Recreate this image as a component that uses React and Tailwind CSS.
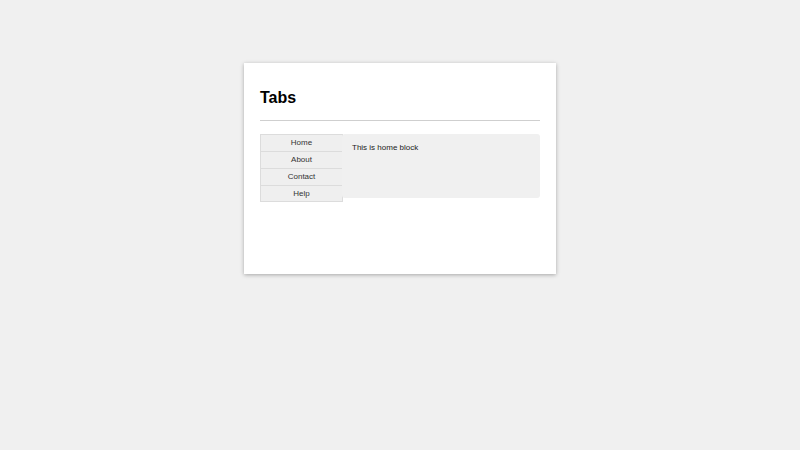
export default function App() {
  const tabs = ["Home", "About", "Contact", "Help"];
  return (
    <div className="min-h-[450px] w-full bg-[#f0f0f0] pt-[63px] font-['Liberation_Sans',Arial,sans-serif]">
      <div className="mx-auto h-[211px] w-[312px] bg-white px-4 pt-[10px] shadow-[0_1px_4px_rgba(0,0,0,0.3)]">
        <h1 className="mt-[17px] text-[16px] font-bold leading-[16px] text-black">Tabs</h1>
        <div className="mt-[14px] h-px bg-[#cfcfcf]" />
        <div className="mt-[13px] flex items-start">
          <div className="flex w-[83px] flex-col">
            {tabs.map((t, i) => (
              <div
                key={t}
                className={
                  "flex h-[17px] items-center justify-center border-x border-t border-[#dcdcdc] bg-[#efefef] text-[8px] leading-none text-[#333] " +
                  (i === tabs.length - 1 ? "border-b" : "")
                }
              >
                {t}
              </div>
            ))}
          </div>
          <div className="-ml-px h-[64px] flex-1 rounded-[3px] bg-[#f0f0f0] px-[10px] pt-[8px] text-[8px] leading-[12px] text-[#222]">
            This is home block
          </div>
        </div>
      </div>
    </div>
  );
}
